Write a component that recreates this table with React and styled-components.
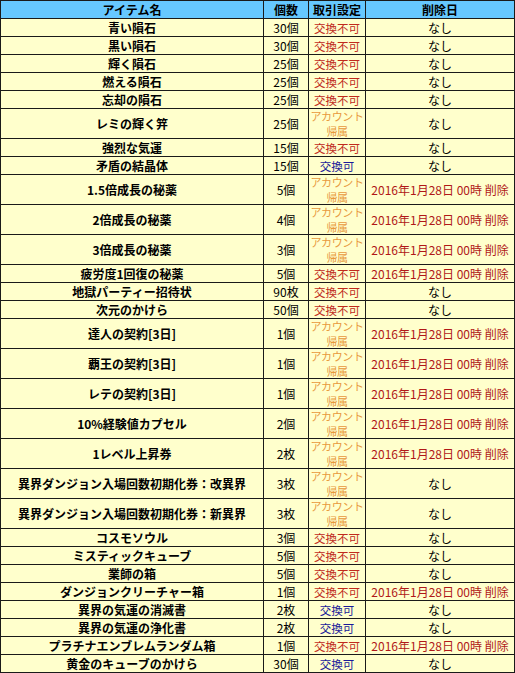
import React from "react";
import styled, { createGlobalStyle } from "styled-components";

const GlobalStyle = createGlobalStyle`
  html, body {
    margin: 0;
    padding: 0;
    background: #ffffff;
  }
  body {
    font-family: "Noto Sans CJK JP", "Noto Sans", sans-serif;
    font-size: 12px;
    color: #000;
  }
`;

const DATE = "2016年1月28日 00時 削除";

const ROWS = [
  ["青い隕石", "30個", "ng", null],
  ["黒い隕石", "30個", "ng", null],
  ["輝く隕石", "25個", "ng", null],
  ["燃える隕石", "25個", "ng", null],
  ["忘却の隕石", "25個", "ng", null],
  ["レミの輝く笄", "25個", "account", null],
  ["強烈な気運", "15個", "ng", null],
  ["矛盾の結晶体", "15個", "ok", null],
  ["1.5倍成長の秘薬", "5個", "account", DATE],
  ["2倍成長の秘薬", "4個", "account", DATE],
  ["3倍成長の秘薬", "3個", "account", DATE],
  ["疲労度1回復の秘薬", "5個", "ng", DATE],
  ["地獄パーティー招待状", "90枚", "ng", null],
  ["次元のかけら", "50個", "ng", null],
  ["達人の契約[3日]", "1個", "account", DATE],
  ["覇王の契約[3日]", "1個", "account", DATE],
  ["レテの契約[3日]", "1個", "account", DATE],
  ["10%経験値カプセル", "2個", "account", DATE],
  ["1レベル上昇券", "2枚", "account", DATE],
  ["異界ダンジョン入場回数初期化券：改異界", "3枚", "account", null],
  ["異界ダンジョン入場回数初期化券：新異界", "3枚", "account", null],
  ["コスモソウル", "3個", "ng", null],
  ["ミスティックキューブ", "5個", "ng", null],
  ["業師の箱", "5個", "ng", null],
  ["ダンジョンクリーチャー箱", "1個", "ng", DATE],
  ["異界の気運の消滅書", "2枚", "ok", null],
  ["異界の気運の浄化書", "2枚", "ok", null],
  ["プラチナエンブレムランダム箱", "1個", "ng", DATE],
  ["黄金のキューブのかけら", "30個", "ok", null],
];

const TRADE = {
  ng: { label: "交換不可", color: "#c02a1c" },
  ok: { label: "交換可", color: "#1a1a9a" },
  account: { label: "アカウント帰属", color: "#e8993c" },
};

const Table = styled.table`
  width: 514px;
  table-layout: fixed;
  border-collapse: collapse;
  background: #ffffcc;
`;

const HeadRow = styled.tr`
  height: 18px;
`;

const HeadCell = styled.th`
  background: #66c8ff;
  border: 1px solid #1a1a1a;
  padding: 0;
  font-size: 12px;
  font-weight: bold;
  line-height: 14px;
  text-align: center;
`;

const Row = styled.tr`
  height: ${({ $tall }) => ($tall ? "30px" : "18px")};
`;

const Cell = styled.td`
  border: 1px solid #1a1a1a;
  padding: 0;
  font-size: ${({ $size }) => $size || "12px"};
  line-height: 14px;
  text-align: center;
  vertical-align: middle;
  white-space: nowrap;
  overflow: hidden;
  font-weight: ${({ $bold }) => ($bold ? "bold" : "normal")};
  color: ${({ $color }) => $color || "#000"};
`;

const Trade = styled.span`
  display: inline-block;
  white-space: nowrap;
  font-size: 11px;
  letter-spacing: -0.4px;
  line-height: 14.5px;
`;

export default function App() {
  return (
    <>
      <GlobalStyle />
      <Table>
        <colgroup>
          <col style={{ width: 263 }} />
          <col style={{ width: 45 }} />
          <col style={{ width: 57 }} />
          <col style={{ width: 149 }} />
        </colgroup>
        <thead>
          <HeadRow>
            <HeadCell>アイテム名</HeadCell>
            <HeadCell>個数</HeadCell>
            <HeadCell>取引設定</HeadCell>
            <HeadCell>削除日</HeadCell>
          </HeadRow>
        </thead>
        <tbody>
          {ROWS.map(([name, count, trade, date]) => {
            const t = TRADE[trade];
            const tall = trade === "account";
            return (
              <Row key={name} $tall={tall}>
                <Cell $bold>{name}</Cell>
                <Cell>{count}</Cell>
                <Cell $color={t.color} $size="11.5px">
                  {tall ? (
                    <Trade>
                      アカウント
                      <br />
                      帰属
                    </Trade>
                  ) : (
                    t.label
                  )}
                </Cell>
                <Cell $color={date ? "#b01818" : "#000"}>{date || "なし"}</Cell>
              </Row>
            );
          })}
        </tbody>
      </Table>
    </>
  );
}
